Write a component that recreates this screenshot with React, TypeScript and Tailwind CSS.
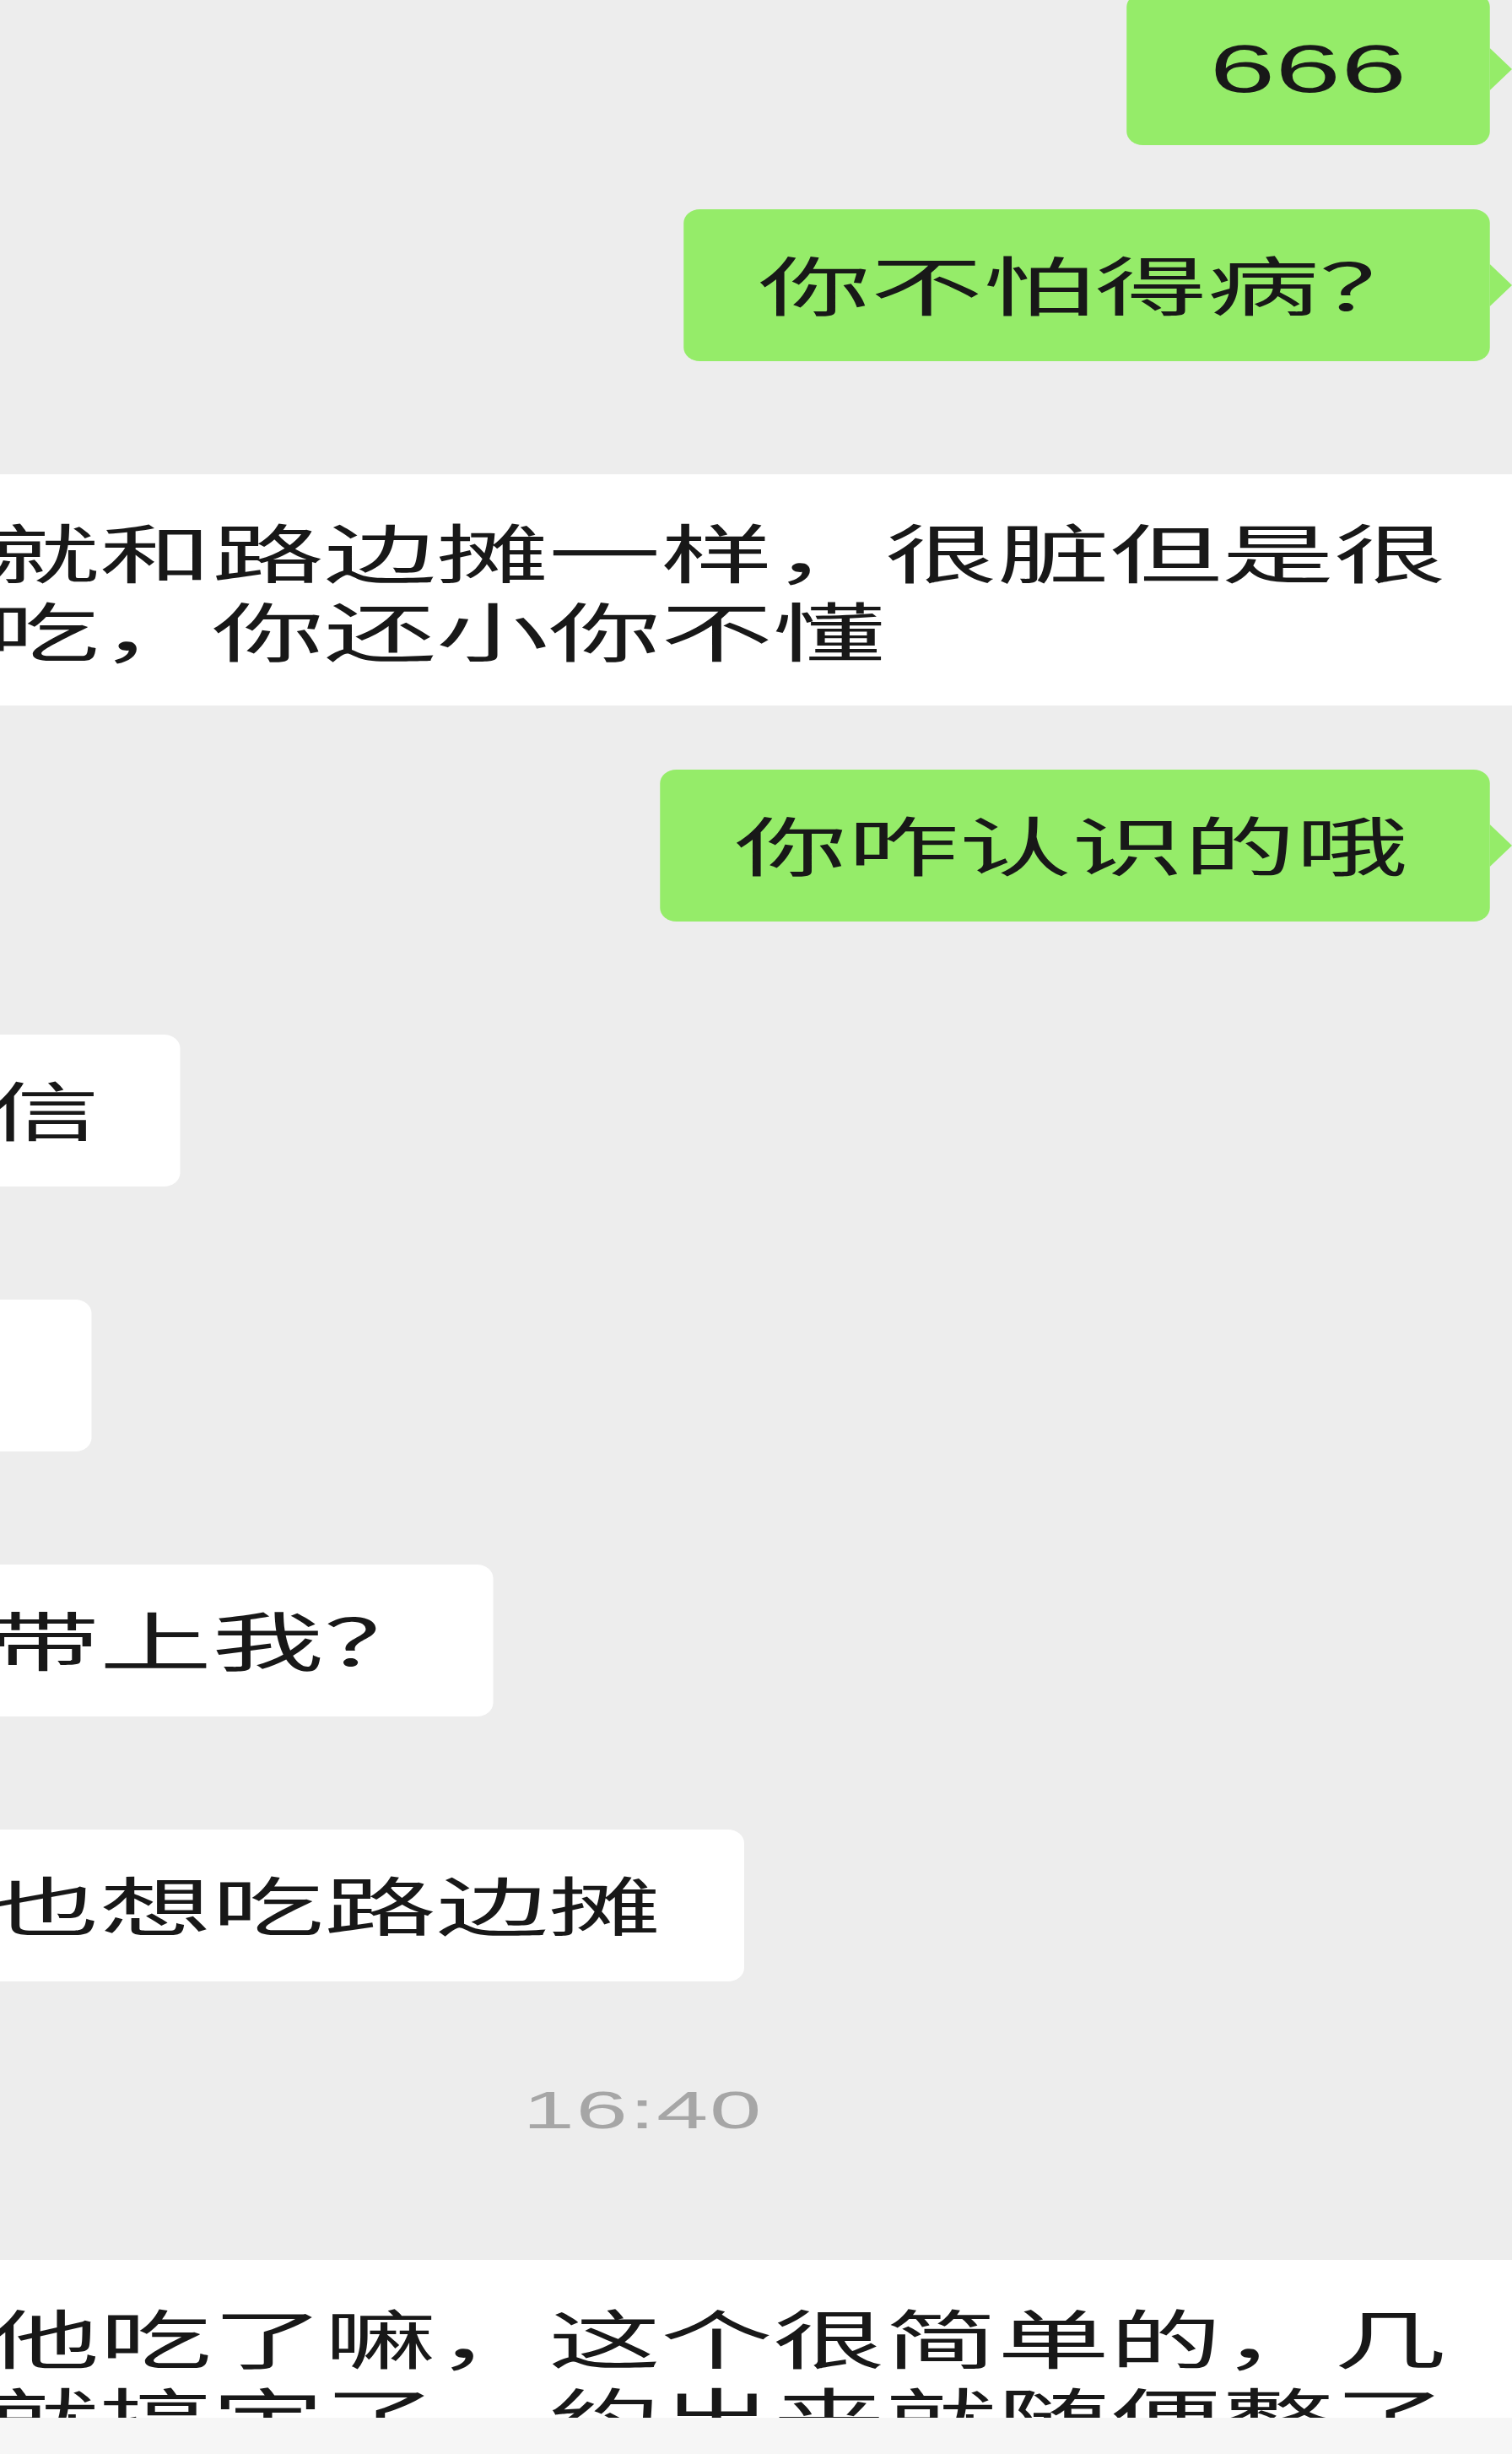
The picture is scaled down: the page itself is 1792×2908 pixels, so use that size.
function Tail() {
  return (
    <span className="absolute left-full top-1/2 -translate-y-1/2 w-0 h-0 border-y-[25px] border-y-transparent border-l-[15px] border-l-[#95ec69]" />
  );
}

function Sent({ text, pr, first, mt }: { text: string; pr: string; first?: boolean; mt: string }) {
  return (
    <div className={`flex justify-end pr-[15.4px] ${mt}`}>
      <div
        className={`relative bg-[#95ec69] rounded-[11px/16px] whitespace-nowrap ${
          first
            ? "px-[56px] py-[43px] text-[80px] leading-[94px] font-['Liberation_Sans',sans-serif]"
            : `pl-[51px] ${pr} pt-[40px] pb-[46px] text-[76px] leading-[94px]`
        }`}
      >
        {text}
        <Tail />
      </div>
    </div>
  );
}

function Received({ text, pr }: { text: string; pr: string }) {
  return (
    <div className="mt-[134px] flex justify-start">
      <div
        className={`-ml-[59.6px] bg-white rounded-[11px/16px] pl-[51px] ${pr} pt-[40px] pb-[46px] text-[76px] leading-[94px] whitespace-nowrap`}
      >
        {text}
      </div>
    </div>
  );
}

function Row({ lines, mt }: { lines: string[]; mt: string }) {
  return (
    <div className={`${mt} bg-white pt-[44px] pb-[44px] text-[76px] leading-[93px]`}>
      <div className="-ml-[8.6px] whitespace-nowrap">
        {lines.map((l) => (
          <div key={l}>{l}</div>
        ))}
      </div>
    </div>
  );
}

export default function App() {
  return (
    <div className="relative w-[1792px] h-[2908px] overflow-hidden bg-[#ededed] text-[#181818] font-['Noto_Sans_CJK_SC',sans-serif]">
      <div className="w-[1024px] origin-top-left [transform:scaleX(1.75)] flex flex-col">
        <Sent text="666" pr="" first mt="-mt-[8px]" />
        <Sent text="你不怕得病？" pr="pr-[39px]" mt="mt-[76px]" />
        <Row mt="mt-[134px]" lines={["就和路边摊一样，很脏但是很", "吃，你还小你不懂"]} />
        <Sent text="你咋认识的哦" pr="pr-[55px]" mt="mt-[76px]" />
        <Received text="信" pr="pr-[55px]" />
        <div className="mt-[134px] flex justify-start">
          <div className="-ml-[60px] w-[121.7px] h-[180px] bg-white rounded-[11px/16px]" />
        </div>
        <Received text="带上我？" pr="pr-[39px]" />
        <Received text="也想吃路边摊" pr="pr-[57px]" />
        <div className="mt-[112px] pl-[354px] text-[63px] leading-[80px] tracking-[1px] text-[#a6a6a6] font-['Liberation_Sans',sans-serif]">
          16:40
        </div>
        <Row mt="mt-[138px]" lines={["他吃了嘛，这个很简单的，几", "就搞定了，约出来就随便整了"]} />
      </div>
      <div className="absolute bottom-0 left-0 right-0 h-[43px] bg-[#f6f6f6]" />
    </div>
  );
}
